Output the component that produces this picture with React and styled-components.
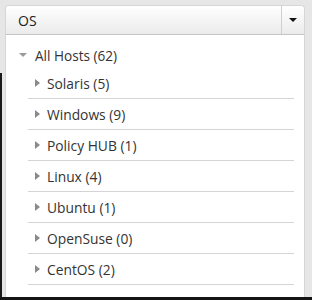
import React from "react";
import styled, { createGlobalStyle } from "styled-components";

const GlobalStyle = createGlobalStyle`
  html, body {
    margin: 0;
    padding: 0;
    background: #e6e6e6;
    font-family: "Open Sans", "Liberation Sans", sans-serif;
  }
`;

const Page = styled.div`
  position: relative;
  width: 312px;
  height: 300px;
  box-sizing: border-box;
  padding: 5px 7px 0 5px;
  border-bottom: 3px solid #141414;
  overflow: hidden;

  &::before {
    content: "";
    position: absolute;
    left: 0;
    top: 73px;
    bottom: 0;
    width: 2px;
    background: #1a1a1a;
  }
`;

const Panel = styled.div`
  width: 300px;
  height: 292px;
  box-sizing: border-box;
  background: #fff;
  border: 1px solid #d6d6d6;
  border-bottom: none;
  border-radius: 4px 4px 0 0;
  display: flex;
  flex-direction: column;
`;

const Header = styled.div`
  display: flex;
  height: 29px;
  box-sizing: border-box;
  background: linear-gradient(#ffffff, #ebebeb);
  border-bottom: 1px solid #c4c4c4;
  border-radius: 4px 4px 0 0;
`;

const Title = styled.div`
  flex: 1;
  display: flex;
  align-items: center;
  padding-left: 12px;
  font-size: 14px;
  color: #222;
`;

const CaretButton = styled.div`
  width: 22px;
  border-left: 1px solid #cfcfcf;
  display: flex;
  align-items: center;
  justify-content: center;
`;

const DownCaret = styled.span`
  width: 0;
  height: 0;
  border-left: 4px solid transparent;
  border-right: 4px solid transparent;
  border-top: 4px solid ${(p) => p.$color || "#111"};
`;

const RightCaret = styled.span`
  width: 0;
  height: 0;
  border-top: 4px solid transparent;
  border-bottom: 4px solid transparent;
  border-left: 5px solid #8a8a8a;
`;

const Tree = styled.div`
  padding: 7px 10px 0 13px;
`;

const RootRow = styled.div`
  display: flex;
  align-items: center;
  gap: 8px;
  height: 26px;
  font-size: 13.6px;
  color: #333;
`;

const Children = styled.ul`
  list-style: none;
  margin: 0 0 0 9px;
  padding: 0;
`;

const Node = styled.li`
  display: flex;
  align-items: center;
  gap: 7px;
  height: 30px;
  padding-left: 7px;
  border-bottom: 1px solid #d4d4d4;
  font-size: 13.8px;
  color: #333;
`;

const hosts = [
  ["Solaris", 5],
  ["Windows", 9],
  ["Policy HUB", 1],
  ["Linux", 4],
  ["Ubuntu", 1],
  ["OpenSuse", 0],
  ["CentOS", 2],
];

export default function App() {
  return (
    <Page>
      <GlobalStyle />
      <Panel>
        <Header>
          <Title>OS</Title>
          <CaretButton>
            <DownCaret />
          </CaretButton>
        </Header>
        <Tree>
          <RootRow>
            <DownCaret $color="#9a9a9a" />
            All Hosts (62)
          </RootRow>
          <Children>
            {hosts.map(([name, count]) => (
              <Node key={name}>
                <RightCaret />
                {name} ({count})
              </Node>
            ))}
          </Children>
        </Tree>
      </Panel>
    </Page>
  );
}
